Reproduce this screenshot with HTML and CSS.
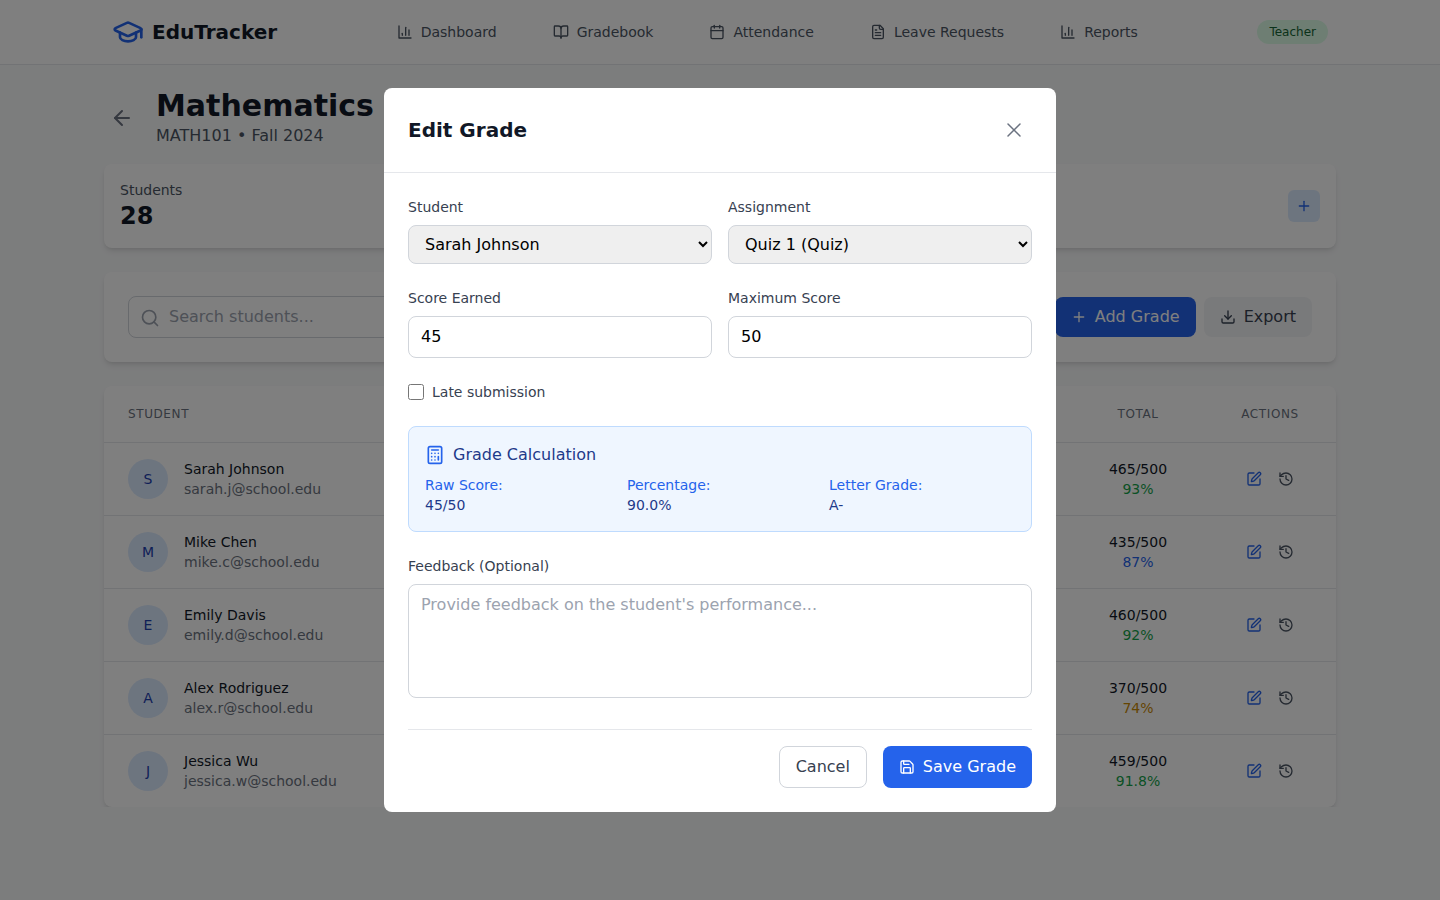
FILE: index.html
```html
<!DOCTYPE html>
<html lang="en">
<head>
    <meta charset="UTF-8">
    <meta name="viewport" content="width=device-width, initial-scale=1.0">
    <title>EduTracker - Mathematics</title>
    <link rel="stylesheet" href="styles.css">
</head>
<body>
    <!-- Iconos reutilizados -->
    <svg class="sprite" xmlns="http://www.w3.org/2000/svg">
        <symbol id="i-cap" viewBox="0 0 24 24"><path d="M21.42 10.922a1 1 0 0 0-.019-1.838L12.83 5.18a2 2 0 0 0-1.66 0L2.6 9.08a1 1 0 0 0 0 1.832l8.57 3.908a2 2 0 0 0 1.66 0z"/><path d="M22 10v6"/><path d="M6 12.5V16a6 3 0 0 0 12 0v-3.5"/></symbol>
        <symbol id="i-chart" viewBox="0 0 24 24"><path d="M3 3v18h18"/><path d="M18 17V9"/><path d="M13 17V5"/><path d="M8 17v-3"/></symbol>
        <symbol id="i-book" viewBox="0 0 24 24"><path d="M12 7v14"/><path d="M3 18a1 1 0 0 1-1-1V4a1 1 0 0 1 1-1h5a4 4 0 0 1 4 4 4 4 0 0 1 4-4h5a1 1 0 0 1 1 1v13a1 1 0 0 1-1 1h-6a3 3 0 0 0-3 3 3 3 0 0 0-3-3z"/></symbol>
        <symbol id="i-calendar" viewBox="0 0 24 24"><path d="M8 2v4"/><path d="M16 2v4"/><rect width="18" height="18" x="3" y="4" rx="2"/><path d="M3 10h18"/></symbol>
        <symbol id="i-file" viewBox="0 0 24 24"><path d="M15 2H6a2 2 0 0 0-2 2v16a2 2 0 0 0 2 2h12a2 2 0 0 0 2-2V7Z"/><path d="M14 2v4a2 2 0 0 0 2 2h4"/><path d="M10 9H8"/><path d="M16 13H8"/><path d="M16 17H8"/></symbol>
        <symbol id="i-back" viewBox="0 0 24 24"><path d="m12 19-7-7 7-7"/><path d="M19 12H5"/></symbol>
        <symbol id="i-plus" viewBox="0 0 24 24"><path d="M5 12h14"/><path d="M12 5v14"/></symbol>
        <symbol id="i-search" viewBox="0 0 24 24"><circle cx="11" cy="11" r="8"/><path d="m21 21-4.3-4.3"/></symbol>
        <symbol id="i-download" viewBox="0 0 24 24"><path d="M21 15v4a2 2 0 0 1-2 2H5a2 2 0 0 1-2-2v-4"/><path d="m7 10 5 5 5-5"/><path d="M12 15V3"/></symbol>
        <symbol id="i-edit" viewBox="0 0 24 24"><path d="M12 3H5a2 2 0 0 0-2 2v14a2 2 0 0 0 2 2h14a2 2 0 0 0 2-2v-7"/><path d="M18.375 2.625a1 1 0 0 1 3 3l-9.013 9.014a2 2 0 0 1-.853.505l-2.873.84a.5.5 0 0 1-.62-.62l.84-2.873a2 2 0 0 1 .506-.852z"/></symbol>
        <symbol id="i-history" viewBox="0 0 24 24"><path d="M3 12a9 9 0 1 0 9-9 9.75 9.75 0 0 0-6.74 2.74L3 8"/><path d="M3 3v5h5"/><path d="M12 7v5l4 2"/></symbol>
        <symbol id="i-close" viewBox="0 0 24 24"><path d="M18 6 6 18"/><path d="m6 6 12 12"/></symbol>
        <symbol id="i-calc" viewBox="0 0 24 24"><rect width="16" height="20" x="4" y="2" rx="2"/><path d="M8 6h8"/><path d="M16 14v4"/><path d="M16 10h.01"/><path d="M12 10h.01"/><path d="M8 10h.01"/><path d="M12 14h.01"/><path d="M8 14h.01"/><path d="M12 18h.01"/><path d="M8 18h.01"/></symbol>
        <symbol id="i-save" viewBox="0 0 24 24"><path d="M15.2 3a2 2 0 0 1 1.4.6l3.8 3.8a2 2 0 0 1 .6 1.4V19a2 2 0 0 1-2 2H5a2 2 0 0 1-2-2V5a2 2 0 0 1 2-2z"/><path d="M17 21v-7a1 1 0 0 0-1-1H8a1 1 0 0 0-1 1v7"/><path d="M7 3v4a1 1 0 0 0 1 1h7"/></symbol>
    </svg>

    <header class="navbar">
        <div class="navbar-inner">
            <a class="brand" href="#">
                <svg class="icon brand-icon"><use href="#i-cap"/></svg>
                <span>EduTracker</span>
            </a>
            <nav class="nav-links">
                <a href="#"><svg class="icon"><use href="#i-chart"/></svg>Dashboard</a>
                <a href="#"><svg class="icon"><use href="#i-book"/></svg>Gradebook</a>
                <a href="#"><svg class="icon"><use href="#i-calendar"/></svg>Attendance</a>
                <a href="#"><svg class="icon"><use href="#i-file"/></svg>Leave Requests</a>
                <a href="#"><svg class="icon"><use href="#i-chart"/></svg>Reports</a>
            </nav>
            <span class="role-badge">Teacher</span>
        </div>
    </header>

    <main class="content">
        <div class="page-head">
            <button class="back-btn"><svg class="icon icon-24"><use href="#i-back"/></svg></button>
            <div>
                <h1>Mathematics</h1>
                <p class="subtitle">MATH101 • Fall 2024</p>
            </div>
        </div>

        <section class="card stats">
            <div>
                <p class="stat-label">Students</p>
                <p class="stat-value">28</p>
            </div>
            <button class="square-btn"><svg class="icon"><use href="#i-plus"/></svg></button>
        </section>

        <section class="card toolbar">
            <div class="search">
                <svg class="icon icon-20 search-icon"><use href="#i-search"/></svg>
                <input type="text" placeholder="Search students...">
            </div>
            <div class="toolbar-actions">
                <button class="btn btn-primary"><svg class="icon"><use href="#i-plus"/></svg>Add Grade</button>
                <button class="btn btn-gray"><svg class="icon"><use href="#i-download"/></svg>Export</button>
            </div>
        </section>

        <section class="card grades">
            <div class="grades-row grades-head">
                <span>Student</span>
                <span class="centered">Total</span>
                <span class="centered">Actions</span>
            </div>

            <div class="grades-row">
                <div class="student">
                    <span class="avatar">S</span>
                    <div><p class="student-name">Sarah Johnson</p><p class="student-mail">sarah.j@school.edu</p></div>
                </div>
                <div class="total"><p>465/500</p><p class="pct-green">93%</p></div>
                <div class="actions">
                    <button class="edit"><svg class="icon"><use href="#i-edit"/></svg></button>
                    <button><svg class="icon"><use href="#i-history"/></svg></button>
                </div>
            </div>

            <div class="grades-row">
                <div class="student">
                    <span class="avatar">M</span>
                    <div><p class="student-name">Mike Chen</p><p class="student-mail">mike.c@school.edu</p></div>
                </div>
                <div class="total"><p>435/500</p><p class="pct-blue">87%</p></div>
                <div class="actions">
                    <button class="edit"><svg class="icon"><use href="#i-edit"/></svg></button>
                    <button><svg class="icon"><use href="#i-history"/></svg></button>
                </div>
            </div>

            <div class="grades-row">
                <div class="student">
                    <span class="avatar">E</span>
                    <div><p class="student-name">Emily Davis</p><p class="student-mail">emily.d@school.edu</p></div>
                </div>
                <div class="total"><p>460/500</p><p class="pct-green">92%</p></div>
                <div class="actions">
                    <button class="edit"><svg class="icon"><use href="#i-edit"/></svg></button>
                    <button><svg class="icon"><use href="#i-history"/></svg></button>
                </div>
            </div>

            <div class="grades-row">
                <div class="student">
                    <span class="avatar">A</span>
                    <div><p class="student-name">Alex Rodriguez</p><p class="student-mail">alex.r@school.edu</p></div>
                </div>
                <div class="total"><p>370/500</p><p class="pct-yellow">74%</p></div>
                <div class="actions">
                    <button class="edit"><svg class="icon"><use href="#i-edit"/></svg></button>
                    <button><svg class="icon"><use href="#i-history"/></svg></button>
                </div>
            </div>

            <div class="grades-row">
                <div class="student">
                    <span class="avatar">J</span>
                    <div><p class="student-name">Jessica Wu</p><p class="student-mail">jessica.w@school.edu</p></div>
                </div>
                <div class="total"><p>459/500</p><p class="pct-green">91.8%</p></div>
                <div class="actions">
                    <button class="edit"><svg class="icon"><use href="#i-edit"/></svg></button>
                    <button><svg class="icon"><use href="#i-history"/></svg></button>
                </div>
            </div>
        </section>
    </main>

    <!-- Modal editar nota -->
    <div class="overlay">
        <div class="modal">
            <div class="modal-head">
                <h2>Edit Grade</h2>
                <button class="close-btn"><svg class="icon icon-24"><use href="#i-close"/></svg></button>
            </div>
            <form class="modal-body">
                <div class="form-grid">
                    <div class="field">
                        <label>Student</label>
                        <select>
                            <option>Sarah Johnson</option>
                            <option>Mike Chen</option>
                            <option>Emily Davis</option>
                        </select>
                    </div>
                    <div class="field">
                        <label>Assignment</label>
                        <select>
                            <option>Quiz 1 (Quiz)</option>
                            <option>Midterm (Exam)</option>
                        </select>
                    </div>
                </div>
                <div class="form-grid">
                    <div class="field">
                        <label>Score Earned</label>
                        <input type="number" value="45">
                    </div>
                    <div class="field">
                        <label>Maximum Score</label>
                        <input type="number" value="50">
                    </div>
                </div>
                <label class="check">
                    <input type="checkbox">
                    <span>Late submission</span>
                </label>
                <div class="calc">
                    <h3><svg class="icon icon-20"><use href="#i-calc"/></svg>Grade Calculation</h3>
                    <div class="calc-grid">
                        <div><p class="calc-label">Raw Score:</p><p class="calc-value">45/50</p></div>
                        <div><p class="calc-label">Percentage:</p><p class="calc-value">90.0%</p></div>
                        <div><p class="calc-label">Letter Grade:</p><p class="calc-value">A-</p></div>
                    </div>
                </div>
                <div class="field">
                    <label>Feedback (Optional)</label>
                    <textarea rows="4" placeholder="Provide feedback on the student's performance..."></textarea>
                </div>
                <div class="modal-foot">
                    <button type="button" class="btn btn-outline">Cancel</button>
                    <button type="button" class="btn btn-save"><svg class="icon"><use href="#i-save"/></svg>Save Grade</button>
                </div>
            </form>
        </div>
    </div>
</body>
</html>
```

FILE: styles.css
```css
* {
    box-sizing: border-box;
}
body {
    font-family: "DejaVu Sans", sans-serif;
    background-color: #f9fafb;
    color: #111827;
    margin: 0;
    font-size: 16px;
    line-height: 24px;
}
h1, h2, h3, p {
    margin: 0;
}
button, input, select, textarea {
    font-family: inherit;
}
button {
    border: none;
    background: none;
    color: inherit;
    padding: 0;
    cursor: pointer;
}
a {
    text-decoration: none;
    color: inherit;
}
.sprite {
    display: none;
}
.icon {
    width: 16px;
    height: 16px;
    flex-shrink: 0;
    display: block;
    fill: none;
    stroke: currentColor;
    stroke-width: 2;
    stroke-linecap: round;
    stroke-linejoin: round;
}
.icon-20 {
    width: 20px;
    height: 20px;
}
.icon-24 {
    width: 24px;
    height: 24px;
}

/* Navbar */
.navbar {
    background-color: #fff;
    border-bottom: 1px solid #e5e7eb;
}
.navbar-inner {
    max-width: 1280px;
    height: 64px;
    margin: 0 auto;
    padding: 0 32px;
    display: flex;
    align-items: center;
    justify-content: space-between;
}
.brand {
    display: flex;
    align-items: center;
    gap: 8px;
    font-size: 20px;
    font-weight: 700;
}
.brand-icon {
    width: 32px;
    height: 32px;
    color: #2563eb;
}
.nav-links {
    display: flex;
    gap: 56px;
}
.nav-links a {
    display: flex;
    align-items: center;
    gap: 8px;
    font-size: 14px;
    line-height: 20px;
    color: #4b5563;
}
.role-badge {
    background-color: #dcfce7;
    color: #166534;
    font-size: 12px;
    line-height: 24px;
    padding: 0 12px;
    border-radius: 12px;
}

/* Contenido */
.content {
    max-width: 1280px;
    margin: 0 auto;
    padding: 23px 24px 0;
}
.page-head {
    display: flex;
    align-items: center;
    gap: 16px;
    margin-bottom: 16px;
}
.back-btn {
    padding: 6px;
    color: #6b7280;
}
h1 {
    font-size: 30px;
    line-height: 36px;
    font-weight: 700;
}
.subtitle {
    color: #4b5563;
}
.card {
    background-color: #fff;
    border-radius: 8px;
    box-shadow: 0 4px 6px -1px rgba(0, 0, 0, 0.1), 0 2px 4px -2px rgba(0, 0, 0, 0.1);
}
.stats {
    display: flex;
    align-items: center;
    justify-content: space-between;
    padding: 16px;
    margin-bottom: 24px;
}
.stat-label {
    font-size: 14px;
    line-height: 20px;
    color: #4b5563;
}
.stat-value {
    font-size: 24px;
    line-height: 32px;
    font-weight: 700;
}
.square-btn {
    width: 32px;
    height: 32px;
    border-radius: 6px;
    background-color: #dbeafe;
    color: #2563eb;
    display: flex;
    align-items: center;
    justify-content: center;
}
.toolbar {
    display: flex;
    align-items: center;
    justify-content: space-between;
    padding: 24px;
    margin-bottom: 24px;
}
.search {
    position: relative;
    width: 320px;
}
.search-icon {
    position: absolute;
    left: 12px;
    top: 12px;
    color: #9ca3af;
}
.search input {
    width: 100%;
    padding: 8px 12px 8px 40px;
    border: 1px solid #d1d5db;
    border-radius: 8px;
    font-size: 16px;
    line-height: 24px;
}
input::placeholder, textarea::placeholder {
    color: #9ca3af;
}
.toolbar-actions {
    display: flex;
    gap: 8px;
}
.btn {
    display: flex;
    align-items: center;
    gap: 8px;
    padding: 8px 16px;
    border-radius: 8px;
    font-size: 16px;
    line-height: 24px;
}
.btn-primary {
    background-color: #2563eb;
    color: #fff;
}
.btn-gray {
    background-color: #f3f4f6;
    color: #374151;
}

/* Tabla */
.grades-row {
    display: grid;
    grid-template-columns: 1fr 132px 132px;
    align-items: center;
    height: 73px;
    padding-left: 24px;
    border-top: 1px solid #e5e7eb;
}
.grades-head {
    height: 56px;
    border-top: none;
    font-size: 12px;
    letter-spacing: 0.6px;
    text-transform: uppercase;
    color: #6b7280;
}
.centered {
    text-align: center;
}
.student {
    display: flex;
    align-items: center;
    gap: 16px;
}
.avatar {
    width: 40px;
    height: 40px;
    border-radius: 50%;
    background-color: #dbeafe;
    color: #1e40af;
    font-size: 14px;
    display: flex;
    align-items: center;
    justify-content: center;
}
.student-name, .student-mail, .total {
    font-size: 14px;
    line-height: 20px;
}
.student-mail {
    color: #6b7280;
}
.total {
    text-align: center;
}
.pct-green {
    color: #16a34a;
}
.pct-blue {
    color: #2563eb;
}
.pct-yellow {
    color: #ca8a04;
}
.actions {
    display: flex;
    justify-content: center;
    gap: 16px;
    color: #4b5563;
}
.actions .edit {
    color: #2563eb;
}

/* Modal */
.overlay {
    position: fixed;
    inset: 0;
    background-color: rgba(0, 0, 0, 0.5);
    display: flex;
    align-items: center;
    justify-content: center;
}
.modal {
    width: 672px;
    background-color: #fff;
    border-radius: 8px;
}
.modal-head {
    display: flex;
    align-items: center;
    justify-content: space-between;
    padding: 24px;
    border-bottom: 1px solid #e5e7eb;
}
h2 {
    font-size: 20px;
    line-height: 28px;
    font-weight: 700;
}
.close-btn {
    padding: 6px;
    color: #6b7280;
}
.close-btn .icon {
    stroke-width: 1.5;
}
.modal-body {
    padding: 24px;
}
.form-grid {
    display: grid;
    grid-template-columns: 1fr 1fr;
    gap: 16px;
    margin-bottom: 24px;
}
.field label {
    display: block;
    font-size: 14px;
    line-height: 20px;
    color: #374151;
    margin-bottom: 8px;
}
.field select {
    width: 100%;
    height: 39px;
    padding: 8px 12px;
    border: 1px solid #d1d5db;
    border-radius: 8px;
    font-size: 16px;
    color: #000;
}
.field input, .field textarea {
    width: 100%;
    padding: 8px 12px;
    border: 1px solid #d1d5db;
    border-radius: 8px;
    font-size: 16px;
    line-height: 24px;
    color: #000;
}
.field textarea {
    resize: none;
}
.check {
    display: flex;
    align-items: center;
    gap: 8px;
    font-size: 14px;
    line-height: 20px;
    color: #374151;
    margin-bottom: 24px;
}
.check input {
    width: 16px;
    height: 16px;
    margin: 0;
}
.calc {
    background-color: #eff6ff;
    border: 1px solid #bfdbfe;
    border-radius: 8px;
    padding: 16px;
    margin-bottom: 24px;
}
.calc h3 {
    display: flex;
    align-items: center;
    gap: 8px;
    font-size: 16px;
    font-weight: 400;
    color: #1e3a8a;
    margin-bottom: 8px;
}
.calc h3 .icon {
    color: #2563eb;
}
.calc-grid {
    display: grid;
    grid-template-columns: repeat(3, 1fr);
    gap: 16px;
    font-size: 14px;
    line-height: 20px;
}
.calc-label {
    color: #2563eb;
}
.calc-value {
    color: #1e3a8a;
}
.modal-foot {
    display: flex;
    justify-content: flex-end;
    gap: 16px;
    margin-top: 24px;
    padding-top: 16px;
    border-top: 1px solid #e5e7eb;
}
.btn-outline {
    background-color: #fff;
    border: 1px solid #d1d5db;
    color: #374151;
}
.btn-save {
    background-color: #2563eb;
    color: #fff;
}
```
